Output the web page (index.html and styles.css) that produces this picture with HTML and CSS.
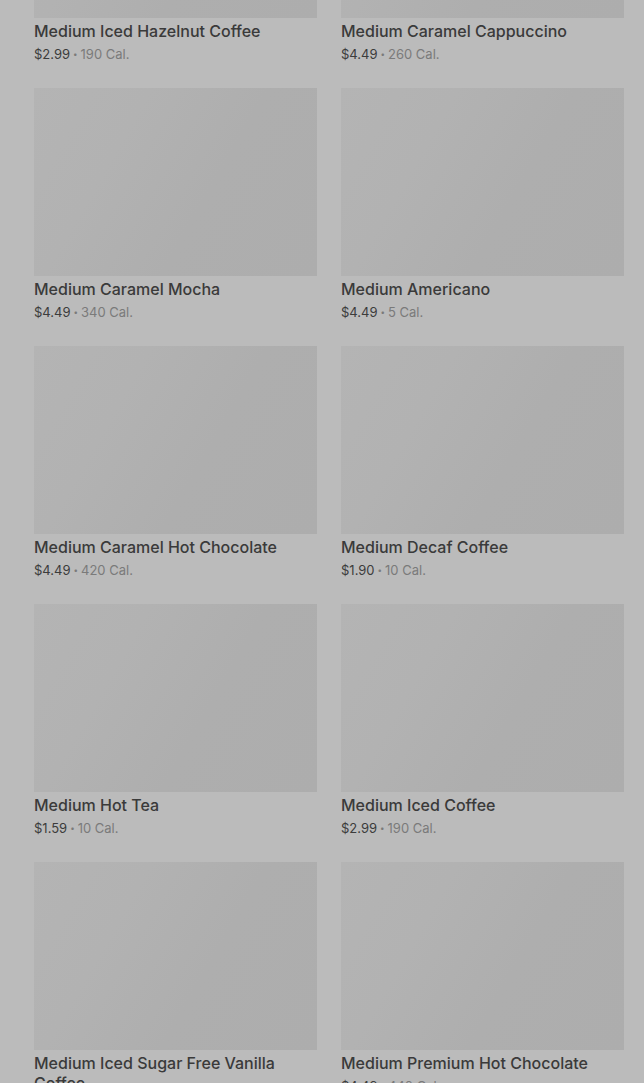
FILE: index.html
```html
<!DOCTYPE html>
<html lang="en">
<head>
<meta charset="utf-8">
<title>Menu</title>
<link rel="stylesheet" href="styles.css">
</head>
<body>
<main class="grid">
  <article class="item"><div class="thumb"></div><h3 class="name">Medium Iced Hazelnut Coffee</h3><p class="meta"><span class="price">$2.99</span><span class="dot">•</span><span class="cal">190 Cal.</span></p></article>
  <article class="item"><div class="thumb"></div><h3 class="name">Medium Caramel Cappuccino</h3><p class="meta"><span class="price">$4.49</span><span class="dot">•</span><span class="cal">260 Cal.</span></p></article>
  <article class="item"><div class="thumb"></div><h3 class="name">Medium Caramel Mocha</h3><p class="meta"><span class="price">$4.49</span><span class="dot">•</span><span class="cal">340 Cal.</span></p></article>
  <article class="item"><div class="thumb"></div><h3 class="name">Medium Americano</h3><p class="meta"><span class="price">$4.49</span><span class="dot">•</span><span class="cal">5 Cal.</span></p></article>
  <article class="item"><div class="thumb"></div><h3 class="name">Medium Caramel Hot Chocolate</h3><p class="meta"><span class="price">$4.49</span><span class="dot">•</span><span class="cal">420 Cal.</span></p></article>
  <article class="item"><div class="thumb"></div><h3 class="name">Medium Decaf Coffee</h3><p class="meta"><span class="price">$1.90</span><span class="dot">•</span><span class="cal">10 Cal.</span></p></article>
  <article class="item"><div class="thumb"></div><h3 class="name">Medium Hot Tea</h3><p class="meta"><span class="price">$1.59</span><span class="dot">•</span><span class="cal">10 Cal.</span></p></article>
  <article class="item"><div class="thumb"></div><h3 class="name">Medium Iced Coffee</h3><p class="meta"><span class="price">$2.99</span><span class="dot">•</span><span class="cal">190 Cal.</span></p></article>
  <article class="item"><div class="thumb"></div><h3 class="name">Medium Iced Sugar Free Vanilla Coffee</h3><p class="meta"><span class="price">$2.99</span><span class="dot">•</span><span class="cal">190 Cal.</span></p></article>
  <article class="item"><div class="thumb"></div><h3 class="name">Medium Premium Hot Chocolate</h3><p class="meta"><span class="price">$4.49</span><span class="dot">•</span><span class="cal">440 Cal.</span></p></article>
</main>
</body>
</html>
```
FILE: styles.css
```css
html, body {
  margin: 0;
  padding: 0;
  background: #bbbbbb;
  height: 100%;
  overflow: hidden;
}
body {
  font-family: Inter, "Noto Sans", sans-serif;
}
.grid {
  display: grid;
  grid-template-columns: 283px 283px;
  column-gap: 24px;
  row-gap: 24px;
  padding: 0 20px 0 34px;
  margin-top: -170px;
}
.item {
  display: flex;
  flex-direction: column;
}
.thumb {
  height: 188px;
  background: linear-gradient(120deg, #b4b4b4 0%, #b2b2b2 30%, #aeaeae 60%, #adadad 100%);
}
.name {
  margin: 3px 0 0;
  font-size: 16px;
  line-height: 20px;
  font-weight: 500;
  color: #3a3a3a;
}
.meta {
  margin: 3px 0 0;
  font-size: 13px;
  line-height: 20px;
  color: #7a7a7a;
  display: flex;
  align-items: center;
  gap: 3px;
}
.price {
  color: #3c3c3c;
}
.dot {
  font-size: 8px;
}
```
